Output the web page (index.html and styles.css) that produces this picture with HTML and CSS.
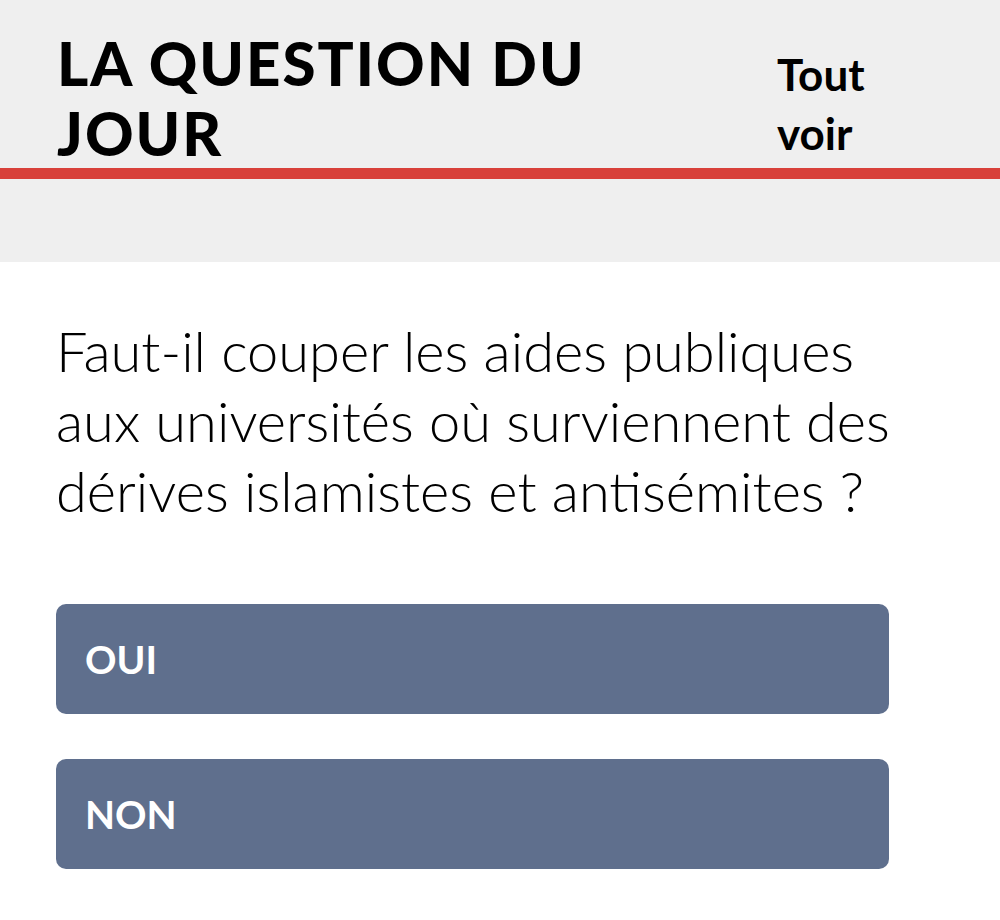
FILE: index.html
```html
<!DOCTYPE html>
<html lang="fr">
  <head>
    <meta charset="UTF-8" />
    <meta name="viewport" content="width=device-width, initial-scale=1.0" />
    <title>La question du jour</title>
    <link rel="stylesheet" href="styles.css">
  </head>
  <body>
    <section class="top">
      <div class="head flex-row">
        <h2 class="title">LA QUESTION DU JOUR</h2>
        <a class="all" href="#">Tout voir</a>
      </div>
    </section>
    <section class="poll">
      <p class="question">Faut-il couper les aides publiques aux universités où surviennent des dérives islamistes et antisémites ?</p>
      <div class="answers flex-col">
        <button class="btn">OUI</button>
        <button class="btn">NON</button>
      </div>
    </section>
  </body>
</html>
```

FILE: styles.css
```css
body {
  margin: 0;
  background-color: #fff;
  font-family: "Lato", "Liberation Sans", sans-serif;
  color: #000;
}
.flex-row {
  display: flex;
}
.flex-col {
  display: flex;
  flex-direction: column;
}
.top {
  background-color: #efefef;
  padding-bottom: 83px;
}
.head {
  align-items: flex-start;
  padding: 28px 0 0 57px;
  border-bottom: 11px solid #d8403a;
}
.title {
  flex: 1;
  margin: 0;
  max-width: 640px;
  font-size: 60px;
  line-height: 70px;
  font-weight: 900;
  letter-spacing: 2px;
}
.all {
  width: 100px;
  margin: 17px 123px 0 auto;
  font-size: 44px;
  line-height: 59px;
  font-weight: 700;
  color: #000;
  text-decoration: none;
}
.poll {
  padding: 54px 57px 40px 56px;
}
.question {
  margin: 0;
  max-width: 850px;
  font-size: 56px;
  line-height: 70px;
  font-weight: 300;
}
.answers {
  gap: 45px;
  margin-top: 78px;
  width: 833px;
}
.btn {
  display: flex;
  align-items: center;
  height: 110px;
  padding: 0 29px;
  border: none;
  border-radius: 10px;
  background-color: #5f6f8d;
  color: #fff;
  font-family: "Lato", "Liberation Sans", sans-serif;
  font-size: 39px;
  font-weight: 700;
}
```
